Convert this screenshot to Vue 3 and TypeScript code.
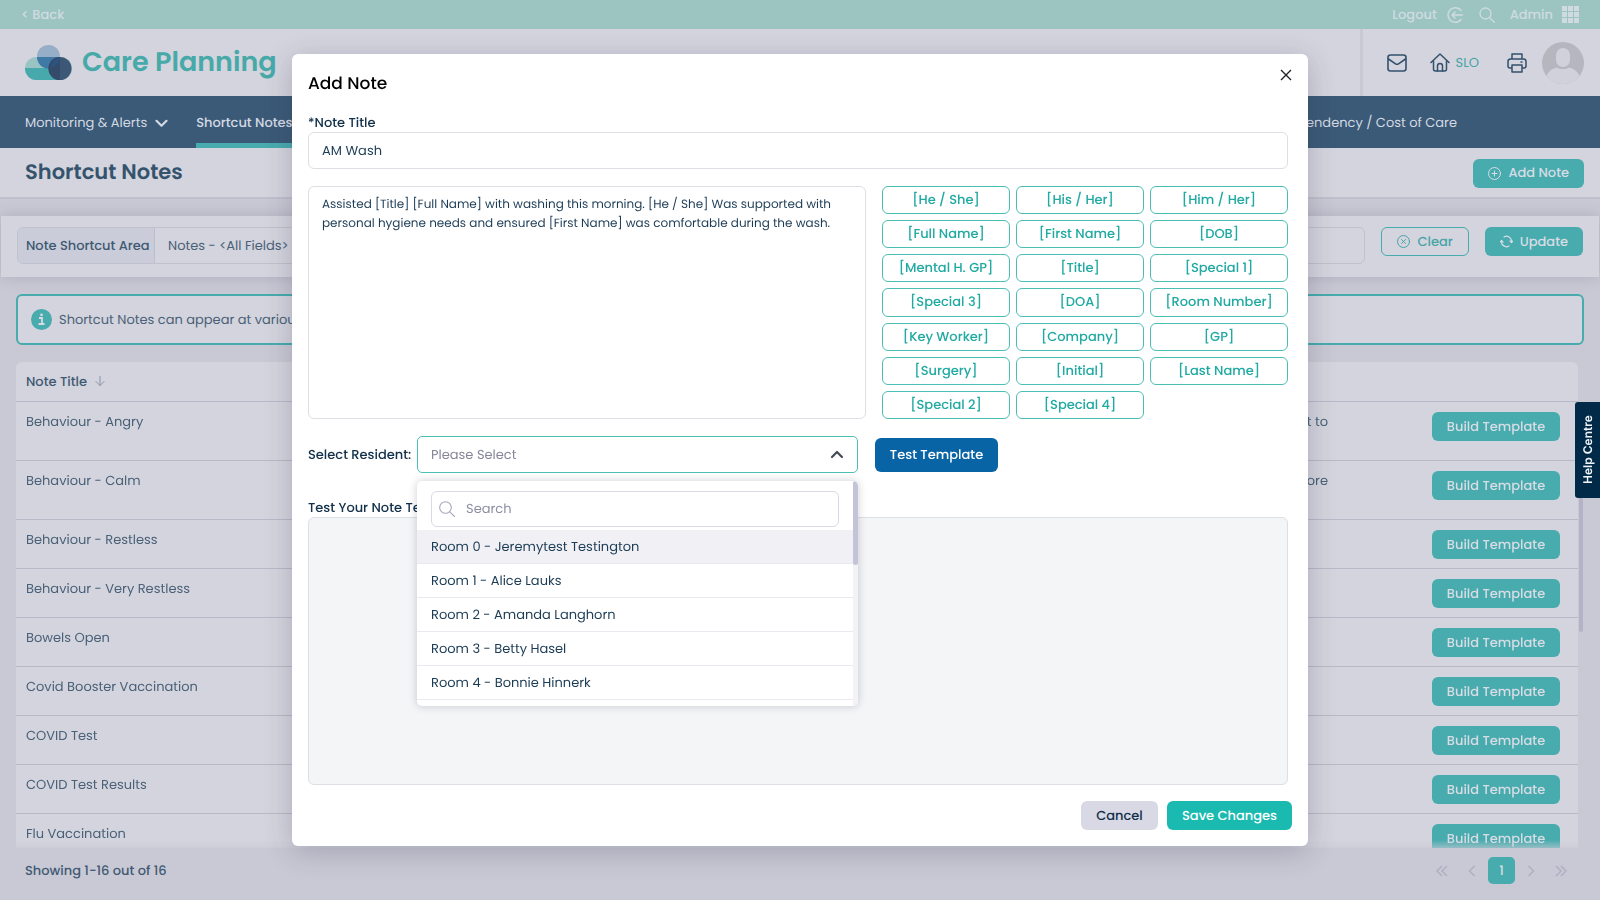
<script setup lang="ts">
import { computed, ref } from 'vue'

interface NoteRow {
  title: string
  text: string
  tall: boolean
}

const rows: NoteRow[] = [
  { title: 'Behaviour - Angry', text: 't to', tall: true },
  { title: 'Behaviour - Calm', text: 'tore', tall: true },
  { title: 'Behaviour - Restless', text: '', tall: false },
  { title: 'Behaviour - Very Restless', text: '', tall: false },
  { title: 'Bowels Open', text: '', tall: false },
  { title: 'Covid Booster Vaccination', text: '', tall: false },
  { title: 'COVID Test', text: '', tall: false },
  { title: 'COVID Test Results', text: '', tall: false },
  { title: 'Flu Vaccination', text: '', tall: false },
]

const tokens: string[] = [
  'He / She', 'His / Her', 'Him / Her',
  'Full Name', 'First Name', 'DOB',
  'Mental H. GP', 'Title', 'Special 1',
  'Special 3', 'DOA', 'Room Number',
  'Key Worker', 'Company', 'GP',
  'Surgery', 'Initial', 'Last Name',
  'Special 2', 'Special 4',
]

const residents: string[] = [
  'Room 0 - Jeremytest Testington',
  'Room 1 - Alice Lauks',
  'Room 2 - Amanda Langhorn',
  'Room 3 - Betty Hasel',
  'Room 4 - Bonnie Hinnerk',
]

const noteTitle = ref('AM Wash')
const noteText = ref(
  'Assisted [Title] [Full Name] with washing this morning. [He / She] Was supported with personal hygiene needs and ensured [First Name] was comfortable during the wash.',
)
const area = ref('Notes - <All Fields>')
const resident = ref('')
const search = ref('')
const menuOpen = ref(true)
const modalOpen = ref(true)
const preview = ref('')

const matches = computed(() =>
  residents.filter((r) => r.toLowerCase().includes(search.value.toLowerCase())),
)

function addToken(token: string): void {
  noteText.value += ` [${token}]`
}

function choose(name: string): void {
  resident.value = name
  menuOpen.value = false
}
</script>

<template>
  <div class="page">
    <header class="topbar">
      <a href="#" class="back">&lt; Back</a>
      <nav class="toplinks" aria-label="Account">
        <a href="#" class="logout">
          Logout
          <svg width="18" height="18" viewBox="0 0 18 18" fill="none" stroke="currentColor" stroke-width="1.5" stroke-linecap="round" stroke-linejoin="round">
            <path d="M14 3.400A7.300 7.300 0 1 0 14 14.600M14 3.400 15 4.500M14 14.600 15 13.500" />
            <path d="M16.5 9H6M9 6 6 9l3 3" />
          </svg>
        </a>
        <button type="button" class="bare" aria-label="Search">
          <svg width="16" height="16" viewBox="0 0 16 16" fill="none" stroke="currentColor" stroke-width="1.3" stroke-linecap="round">
            <circle cx="6.5" cy="6.5" r="5.5" />
            <path d="m10.5 10.5 5 5" />
          </svg>
        </button>
        <a href="#" class="admin">
          Admin
          <svg width="17" height="17" viewBox="0 0 17 17" fill="currentColor">
            <path d="M0 0h5v5H0zM6 0h5v5H6zM12 0h5v5h-5zM0 6h5v5H0zM6 6h5v5H6zM12 6h5v5h-5zM0 12h5v5H0zM6 12h5v5H6zM12 12h5v5h-5z" />
          </svg>
        </a>
      </nav>
    </header>

    <div class="brandbar">
      <a href="#" class="brand">
        <svg width="47" height="35" viewBox="0 0 47 35">
          <rect x="0" y="12" width="47" height="23" rx="11.5" fill="#9ac3c4" />
          <path d="M0 23h35v12H11.500A11.500 11.500 0 0 1 0 23z" fill="#48a9ac" />
          <circle cx="23.500" cy="11.500" r="11.500" fill="#96aec7" />
          <path d="M12 12h23a11.500 11.500 0 0 1-23 0z" fill="#3f79a6" />
          <circle cx="35" cy="23.500" r="11.500" fill="#3d5877" />
          <path d="M35 12v23a11.500 11.500 0 0 1 0-23z" fill="#354b6b" />
          <path d="M35 12a11.500 11.500 0 0 1-9 10.700A11.500 11.500 0 0 1 35 12z" fill="#2c5480" />
        </svg>
        <span>Care Planning</span>
      </a>
      <div class="tools">
        <button type="button" class="bare mail" aria-label="Messages">
          <svg width="20" height="18" viewBox="0 0 20 18" fill="none" stroke="currentColor" stroke-width="1.600" stroke-linecap="round" stroke-linejoin="round">
            <rect x="1" y="1" width="18" height="16" rx="2.500" />
            <path d="m1.500 5 7 4.800q1.500 1 3 0L18.500 5" />
          </svg>
        </button>
        <a href="#" class="site">
          <svg width="20" height="19" viewBox="0 0 20 19" fill="none" stroke="currentColor" stroke-width="1.500" stroke-linecap="round" stroke-linejoin="round">
            <path d="M1 9.500 10 1l9 8.500" />
            <path d="M3.500 8v8q0 2 2 2h9q2 0 2-2V8" />
            <path d="M7.500 18v-5a2.500 2.500 0 0 1 5 0v5" />
          </svg>
          SLO
        </a>
        <button type="button" class="bare print" aria-label="Print">
          <svg width="20" height="20" viewBox="0 0 20 20" fill="none" stroke="currentColor" stroke-width="1.500" stroke-linejoin="round">
            <path d="M5 6V1h10v5" />
            <path d="M5 15H3q-2 0-2-2V8.500Q1 6 3.500 6h13Q19 6 19 8.500V13q0 2-2 2h-2" />
            <path d="M5 12h10v7H5zM13.500 9h2" />
          </svg>
        </button>
        <button type="button" class="bare" aria-label="Profile">
          <svg width="42" height="42" viewBox="0 0 42 42">
            <circle cx="21" cy="21" r="21" fill="#b5b6be" />
            <path d="M4.500 34c2-5 6-7.500 10.500-8.500 3 2 9 2 12 0 4.500 1 8.500 3.500 10.500 8.500A21 21 0 0 1 4.500 34z" fill="#d0d1db" />
            <rect x="14" y="6" width="14" height="19" rx="7" fill="#d0d1db" />
          </svg>
        </button>
      </div>
    </div>

    <nav class="mainnav" aria-label="Main">
      <a href="#" class="item">
        Monitoring &amp; Alerts
        <svg width="13" height="9" viewBox="0 0 13 9" fill="none" stroke="currentColor" stroke-width="2.200" stroke-linecap="round" stroke-linejoin="round"><path d="m1.500 1.800 5 5 5-5" /></svg>
      </a>
      <a href="#" class="item current">Shortcut Notes</a>
      <a href="#" class="item last">Dependency / Cost of Care</a>
    </nav>

    <div class="titlebar">
      <h1>Shortcut Notes</h1>
      <button type="button" class="btn teal" @click="modalOpen = true">
        <svg width="13" height="13" viewBox="0 0 13 13" fill="none" stroke="currentColor" stroke-linecap="round"><circle cx="6.500" cy="6.500" r="6" /><path d="M6.500 4v5M4 6.500h5" /></svg>
        Add Note
      </button>
    </div>

    <form class="filters" @submit.prevent>
      <div class="group">
        <label for="area">Note Shortcut Area</label>
        <input id="area" v-model="area" type="text" />
      </div>
      <button type="button" class="btn outline" @click="area = ''">
        <svg width="13" height="13" viewBox="0 0 13 13" fill="none" stroke="currentColor" stroke-linecap="round"><circle cx="6.500" cy="6.500" r="6" /><path d="m4.500 4.500 4 4M8.500 4.500l-4 4" /></svg>
        Clear
      </button>
      <button type="submit" class="btn teal">
        <svg width="13" height="13" viewBox="0 0 13 13" fill="none" stroke="currentColor" stroke-width="1.200" stroke-linecap="round" stroke-linejoin="round"><path d="M4 2a5 5 0 0 1 7.500 5M9 11A5 5 0 0 1 1.500 6" /><path d="m10 6 1.500 1.500L13 6M0 7l1.500-1.500L3 7" /></svg>
        Update
      </button>
    </form>

    <p class="notice">
      <svg width="21" height="21" viewBox="0 0 21 21"><circle cx="10.500" cy="10.500" r="10.500" fill="#48abad" /><circle cx="10.500" cy="5.800" r="1.400" fill="#d8d9e2" /><path d="M8 9h3v5.500M7.500 15h6" fill="none" stroke="#d8d9e2" stroke-width="1.800" /></svg>
      Shortcut Notes can appear at various
    </p>

    <main class="listing">
      <table>
        <thead>
          <tr>
            <th>
              Note Title
              <svg width="10" height="10" viewBox="0 0 10 10" fill="none" stroke="#8c92a8" stroke-linecap="round" stroke-linejoin="round"><path d="M5 .5v9M1 5.500l4 4 4-4" /></svg>
            </th>
            <th></th>
            <th></th>
          </tr>
        </thead>
        <tbody>
          <tr v-for="row in rows" :key="row.title" :class="{ tall: row.tall }">
            <td class="name">{{ row.title }}</td>
            <td class="body">{{ row.text }}</td>
            <td class="act"><button type="button" class="btn teal">Build Template</button></td>
          </tr>
        </tbody>
      </table>
      <div class="track"><div class="thumb"></div></div>
    </main>

    <footer class="pager">
      <span>Showing 1-16 out of 16</span>
      <nav aria-label="Pages">
        <button type="button" class="bare" aria-label="First page"><svg width="12" height="12" viewBox="0 0 12 12"><path d="M6 1 1 6l5 5M11 1 6 6l5 5" /></svg></button>
        <button type="button" class="bare" aria-label="Previous page"><svg width="12" height="12" viewBox="0 0 12 12"><path d="M9.500 1l-5 5 5 5" /></svg></button>
        <button type="button" class="page-no">1</button>
        <button type="button" class="bare" aria-label="Next page"><svg width="12" height="12" viewBox="0 0 12 12"><path d="m2.500 1 5 5-5 5" /></svg></button>
        <button type="button" class="bare" aria-label="Last page"><svg width="12" height="12" viewBox="0 0 12 12"><path d="m1 1 5 5-5 5M6 1l5 5-5 5" /></svg></button>
      </nav>
    </footer>

    <div v-if="modalOpen" class="overlay">
      <section class="modal" role="dialog" aria-labelledby="dlg-title">
        <div class="modal-head">
          <h2 id="dlg-title">Add Note</h2>
          <button type="button" class="bare close" aria-label="Close" @click="modalOpen = false">
            <svg width="12" height="12" viewBox="0 0 12 12" fill="none" stroke="#1d1d22" stroke-width="1.300"><path d="m1 1 10 10M11 1 1 11" /></svg>
          </button>
        </div>

        <label for="note-title" class="field-label">*Note Title</label>
        <input id="note-title" v-model="noteTitle" class="box" type="text" />

        <div class="editor">
          <textarea v-model="noteText" class="box" aria-label="Note template"></textarea>
          <div class="tokens">
            <button v-for="t in tokens" :key="t" type="button" @click="addToken(t)">[{{ t }}]</button>
          </div>
        </div>

        <div class="resident">
          <label for="resident">Select Resident:</label>
          <div class="picker">
            <select id="resident" v-model="resident" @mousedown.prevent="menuOpen = !menuOpen">
              <option value="">Please Select</option>
              <option v-for="r in residents" :key="r" :value="r">{{ r }}</option>
            </select>
            <svg class="caret" width="14" height="9" viewBox="0 0 14 9" fill="none" stroke="#454b55" stroke-width="2.200" stroke-linecap="round" stroke-linejoin="round"><path d="m2 7 5-5 5 5" /></svg>
            <div v-if="menuOpen" class="menu">
              <div class="menu-body">
                <div class="searchbox">
                  <svg width="16" height="16" viewBox="0 0 16 16" fill="none" stroke="#a9a9b9" stroke-width="1.100" stroke-linecap="round"><circle cx="6.500" cy="6.500" r="5.800" /><path d="m10.800 10.800 4.700 4.700" /></svg>
                  <input v-model="search" type="text" placeholder="Search" aria-label="Search" />
                </div>
                <ul role="listbox">
                  <li v-for="(r, i) in matches" :key="r" role="option" :aria-selected="i === 0" :class="{ active: i === 0 }" @click="choose(r)">{{ r }}</li>
                </ul>
              </div>
              <div class="menu-track"><div class="menu-thumb"></div></div>
            </div>
          </div>
          <button type="button" class="btn blue" @click="preview = noteText">Test Template</button>
        </div>

        <label for="preview" class="field-label">Test Your Note Template</label>
        <textarea id="preview" v-model="preview" class="box preview" readonly></textarea>

        <div class="actions">
          <button type="button" class="btn cancel" @click="modalOpen = false">Cancel</button>
          <button type="button" class="btn save">Save Changes</button>
        </div>
      </section>
    </div>

    <button type="button" class="help">Help Centre</button>
  </div>
</template>

<style>
body {
  margin: 0;
  background: #c9c9d5;
}
</style>

<style scoped>
* {
  box-sizing: border-box;
}

.page {
  display: flex;
  flex-direction: column;
  height: 100vh;
  overflow: hidden;
  background: #c9c9d5;
  color: #4a6178;
  font: 400 13px/20px Poppins, Inter, "Open Sans", sans-serif;
  text-rendering: geometricPrecision;
}

a {
  color: inherit;
  text-decoration: none;
}

button,
input,
select,
textarea {
  font: inherit;
  color: inherit;
  text-rendering: inherit;
}

button {
  cursor: pointer;
}

svg {
  display: block;
  flex: none;
}

h1,
h2,
p,
ul {
  margin: 0;
  padding: 0;
}

.bare {
  display: flex;
  padding: 0;
  border: 0;
  background: none;
}

.btn {
  display: flex;
  align-items: center;
  justify-content: center;
  gap: 7px;
  height: 29px;
  padding: 0 15px;
  border: 0;
  border-radius: 6px;
  font-weight: 500;
  white-space: nowrap;
}

.teal {
  background: #48abad;
  color: #d7dce5;
}

.outline {
  border: 1px solid #48abad;
  background: transparent;
  color: #48a4a8;
}

.topbar {
  display: flex;
  align-items: center;
  justify-content: space-between;
  flex: none;
  height: 29px;
  padding: 0 21px;
  background: #9cc5c1;
  color: #cfdbe1;
  font-weight: 500;
}

.toplinks,
.logout,
.admin {
  display: flex;
  align-items: center;
}

.toplinks {
  gap: 15px;
}

.logout,
.admin {
  gap: 9px;
}

.brandbar {
  display: flex;
  justify-content: space-between;
  flex: none;
  height: 67px;
  padding: 0 16px 0 25px;
  background: #d3d4dd;
}

.brand {
  display: flex;
  align-items: center;
  gap: 10px;
  color: #48a9a9;
  font-size: 27px;
  font-weight: 600;
}

.tools {
  display: flex;
  align-items: center;
  padding-left: 24px;
  border-left: 3px solid #c9c9d4;
  color: #33506d;
}

.mail {
  margin-right: 23px;
}

.site {
  display: flex;
  align-items: center;
  gap: 6px;
  margin-right: 28px;
  color: #48a4a5;
}

.site svg {
  color: #33506d;
}

.print {
  margin-right: 15px;
}

.mainnav {
  display: flex;
  gap: 28px;
  flex: none;
  height: 52px;
  padding: 0 143px 0 25px;
  background: #3b5a77;
  color: #d3d9e3;
  font-size: 13px;
}

.item {
  display: flex;
  align-items: center;
  gap: 8px;
  padding-top: 7px;
  border-bottom: 5px solid transparent;
  white-space: nowrap;
}

.current {
  border-bottom-color: #48abad;
  font-weight: 500;
}

.last {
  margin-left: auto;
}

.titlebar {
  display: flex;
  align-items: center;
  justify-content: space-between;
  flex: none;
  height: 51px;
  padding: 1px 16px 0 25px;
  border-bottom: 2px solid #c0c0cc;
  background: #d3d4dd;
}

h1 {
  color: #35536d;
  font-size: 21px;
  font-weight: 600;
}

.filters {
  display: flex;
  align-items: flex-start;
  gap: 16px;
  flex: none;
  margin: 17px 1px 0;
  padding: 11px 16px 13px;
  background: #d3d4dd;
  box-shadow: 0 0 14px rgba(60, 60, 90, 0.2);
}

.group {
  display: flex;
  flex: 1;
  height: 37px;
  border: 1px solid #bfc1cd;
  border-radius: 6px;
  overflow: hidden;
}

.group label {
  display: flex;
  align-items: center;
  flex: none;
  width: 137px;
  padding-left: 8px;
  border-right: 1px solid #b9bfcc;
  background: #cacdd9;
  color: #415a73;
  font-weight: 500;
  white-space: nowrap;
}

.group input {
  flex: 1;
  min-width: 0;
  padding: 0 13px;
  border: 0;
  background: transparent;
}

.notice {
  display: flex;
  align-items: center;
  gap: 7px;
  flex: none;
  height: 51px;
  margin: 17px 16px;
  padding: 0 13px;
  border: 2px solid #48abad;
  border-radius: 6px;
  background: #d3d4dd;
}

.listing {
  display: flex;
  flex: 1;
  min-height: 0;
  margin: 0 16px;
  overflow: hidden;
  -webkit-mask-image: linear-gradient(#000 calc(100% - 8px), rgba(0, 0, 0, 0.4));
  mask-image: linear-gradient(#000 calc(100% - 8px), rgba(0, 0, 0, 0.4));
}

table {
  flex: 1;
  align-self: flex-start;
  border-collapse: separate;
  border-spacing: 0;
  border-radius: 6px 6px 0 0;
  background: #d3d4dd;
}

th,
td {
  padding: 0;
  border-bottom: 1px solid #b7b9c8;
  text-align: left;
  vertical-align: top;
}

th {
  height: 40px;
  padding: 10px 0 0 10px;
  color: #415a73;
  font-weight: 500;
}

th svg {
  display: inline-block;
  margin-left: 5px;
}

td {
  height: 49px;
}

.tall td {
  height: 59px;
}

.name {
  padding: 10px 0 0 10px;
}

.body {
  padding: 10px 0 0;
  text-align: right;
}

.act {
  width: 250px;
  padding: 10px 18px 0 0;
}

.act .btn {
  width: 128px;
  margin-left: auto;
}

.track {
  width: 6px;
  padding: 40px 1px 0;
}

.thumb {
  height: 230px;
  border-radius: 3px;
  background: #b3b3c7;
}

.pager {
  display: flex;
  align-items: center;
  justify-content: space-between;
  flex: none;
  height: 52px;
  padding: 0 33px 7px 25px;
  color: #415a73;
  font-weight: 500;
}

.pager nav {
  display: flex;
  align-items: center;
  gap: 17px;
}

.pager svg {
  fill: none;
  stroke: #aeb0c2;
  stroke-width: 1.5px;
}

.page-no {
  width: 27px;
  height: 27px;
  margin: 0 -6px;
  padding: 0;
  border: 0;
  border-radius: 5px;
  background: #48abad;
  color: #d7dce5;
  font-weight: 500;
}

.overlay {
  position: fixed;
  inset: 0;
  display: flex;
  align-items: center;
  justify-content: center;
}

.modal {
  display: flex;
  flex-direction: column;
  width: 63.5%;
  height: 88%;
  padding: 15px 16px 16px;
  border-radius: 6px;
  background: #fff;
  box-shadow: 0 6px 28px rgba(40, 40, 70, 0.24);
  color: #1c3c55;
}

.modal-head {
  display: flex;
  justify-content: space-between;
  flex: none;
  height: 44px;
}

h2 {
  padding-top: 2px;
  color: #000;
  font-size: 17px;
  font-weight: 500;
  line-height: 24px;
}

.close {
  align-self: flex-start;
}

.field-label,
.resident label {
  color: #123049;
  font-weight: 500;
}

.field-label {
  flex: none;
  align-self: flex-start;
  height: 19px;
}

.box {
  display: block;
  height: 37px;
  margin-right: 4px;
  padding: 0 13px;
  border: 1px solid #dedfe4;
  border-radius: 6px;
  background: #fff;
  outline: 0;
  resize: none;
}

.modal > input.box {
  flex: none;
}

.editor {
  display: grid;
  grid-template-columns: 558fr 406fr;
  gap: 16px;
  flex: none;
  height: 233px;
  margin: 17px 4px 17px 0;
}

.editor .box {
  height: 100%;
  margin: 0;
  padding: 8px 13px;
  font-size: 12px;
  line-height: 19px;
}

.tokens {
  display: grid;
  grid-template-columns: 128fr 128fr 138fr;
  grid-auto-rows: 1fr;
  gap: 6px;
}

.tokens button {
  padding: 0;
  border: 1px solid #4bbfb6;
  border-radius: 6px;
  background: #fff;
  color: #21aaa2;
  font-weight: 500;
}

.resident {
  display: flex;
  align-items: center;
  flex: none;
  margin: 0 4px 25px 0;
}

.resident label {
  width: 109px;
  white-space: nowrap;
}

.picker {
  position: relative;
  width: 45%;
  margin-right: 17px;
}

.picker select {
  display: block;
  width: 100%;
  height: 37px;
  padding: 0 13px;
  border: 1px solid #4dc0b5;
  border-radius: 5px;
  background: #fff;
  color: #86869a;
  appearance: none;
  outline: 0;
}

.caret {
  position: absolute;
  top: 14px;
  right: 14px;
  pointer-events: none;
}

.menu {
  position: absolute;
  top: 45px;
  left: 0;
  right: 0;
  display: flex;
  height: 225px;
  border-radius: 5px;
  background: #fff;
  box-shadow: 0 0 8px rgba(30, 30, 60, 0.22);
  overflow: hidden;
}

.menu-body {
  flex: 1;
}

.searchbox {
  display: flex;
  align-items: center;
  gap: 11px;
  height: 36px;
  margin: 10px 14px 3px;
  padding: 0 7px;
  border: 1px solid #d9dae4;
  border-radius: 6px;
}

.searchbox input {
  flex: 1;
  padding: 0;
  border: 0;
  outline: 0;
}

.searchbox input::placeholder {
  color: #8f8fa3;
}

.menu ul {
  list-style: none;
}

.menu li {
  height: 34px;
  padding: 0 14px;
  border-bottom: 1px solid #e9e9ef;
  line-height: 34px;
  cursor: pointer;
}

.menu .active {
  background: #f0f0f5;
}

.menu-track {
  width: 5px;
  background: #f3f3f7;
}

.menu-thumb {
  height: 84px;
  border-radius: 3px;
  background: #c3c4d8;
}

.blue {
  width: 123px;
  height: 34px;
  background: #0864a4;
  color: #fff;
}

.preview {
  flex: 1;
  min-height: 0;
  background: #f4f5f7;
}

.actions {
  display: flex;
  justify-content: flex-end;
  gap: 9px;
  flex: none;
  margin-top: 16px;
}

.cancel {
  width: 77px;
  background: #d8d9e5;
  color: #123049;
}

.save {
  width: 125px;
  background: #1abab0;
  color: #fff;
}

.help {
  position: fixed;
  top: 402px;
  right: 0;
  width: 25px;
  height: 96px;
  padding: 0;
  border: 0;
  border-radius: 0 3px 3px 0;
  background: #012a49;
  color: #f0f3f7;
  font: 600 12px/25px Inter, sans-serif;
  writing-mode: vertical-rl;
  transform: rotate(180deg);
}
</style>
